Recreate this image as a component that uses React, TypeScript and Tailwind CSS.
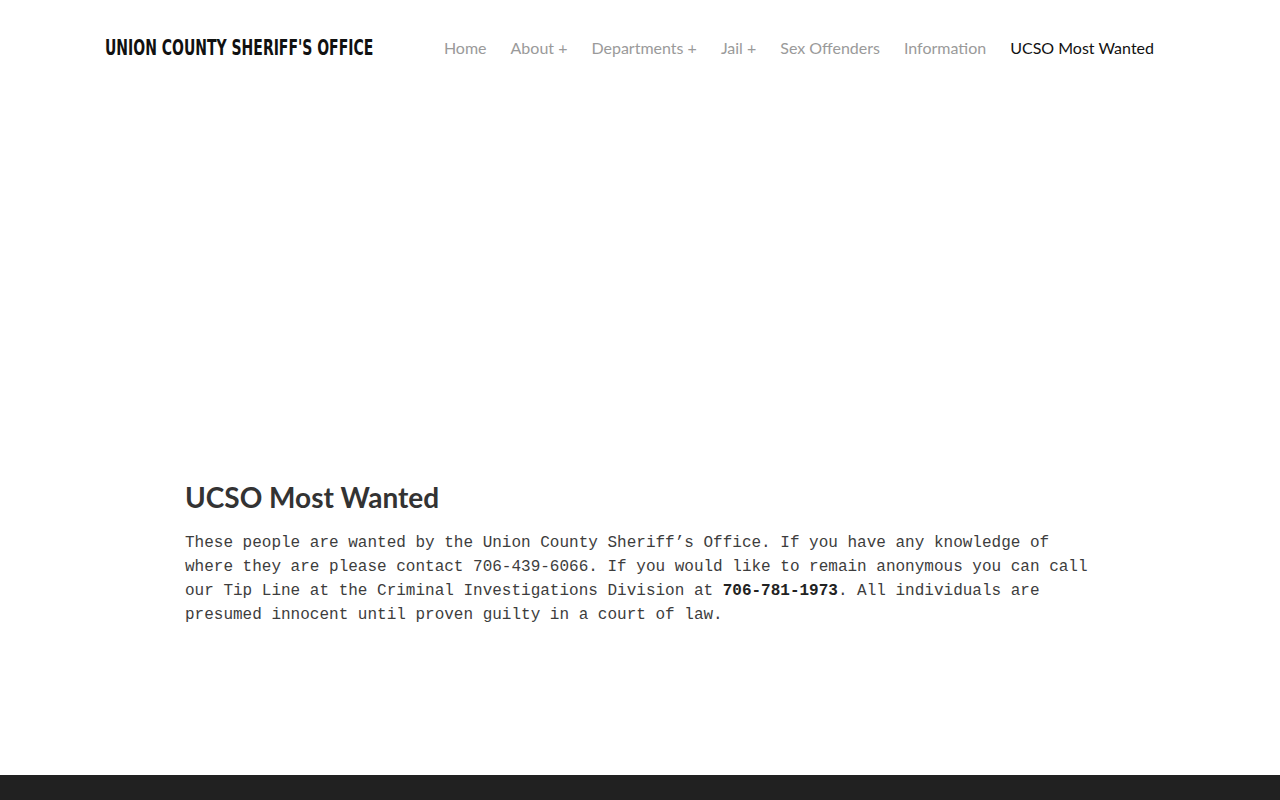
export default function App() {
  const nav = [
    { label: "Home", active: false },
    { label: "About +", active: false },
    { label: "Departments +", active: false },
    { label: "Jail +", active: false },
    { label: "Sex Offenders", active: false },
    { label: "Information", active: false },
    { label: "UCSO Most Wanted", active: true },
  ]

  return (
    <div className="min-h-[800px] flex flex-col bg-white">
      <header className="h-[95px] flex items-center justify-between pl-[105px] pr-[126px]">
        <div className="w-[268px] h-[30px] flex items-center overflow-visible">
          <span
            className="inline-block whitespace-nowrap origin-left scale-x-[0.707] text-[22px] font-bold uppercase text-[#111]"
            style={{ fontFamily: '"DejaVu Sans Condensed", "DejaVu Sans", sans-serif' }}
          >
            Union County Sheriff's Office
          </span>
        </div>
        <nav
          className="flex items-center gap-[24px] text-[16px] whitespace-nowrap"
          style={{ fontFamily: 'Lato, "Open Sans", sans-serif' }}
        >
          {nav.map((item) => (
            <a key={item.label} href="#" className={item.active ? "text-[#111]" : "text-[#9a9a9a]"}>
              {item.label}
            </a>
          ))}
        </nav>
      </header>

      <div className="h-[384px]" />

      <main className="w-[910px] mx-auto pb-[148px]">
        <h1
          className="text-[28px] font-bold text-[#333] leading-[36px] mb-[16px]"
          style={{ fontFamily: 'Lato, "Open Sans", sans-serif' }}
        >
          UCSO Most Wanted
        </h1>
        <p
          className="text-[16px] leading-[24px] text-[#3d3d3d]"
          style={{ fontFamily: '"Liberation Mono", "DejaVu Sans Mono", monospace' }}
        >
          These people are wanted by the Union County Sheriff’s Office. If you have any knowledge of where they are
          please contact 706-439-6066. If you would like to remain anonymous you can call our Tip Line at the Criminal
          Investigations Division at <strong className="font-bold text-[#222]">706-781-1973</strong>. All individuals
          are presumed innocent until proven guilty in a court of law.
        </p>
      </main>

      <footer className="mt-auto h-[25px] bg-[#212121]" />
    </div>
  )
}
